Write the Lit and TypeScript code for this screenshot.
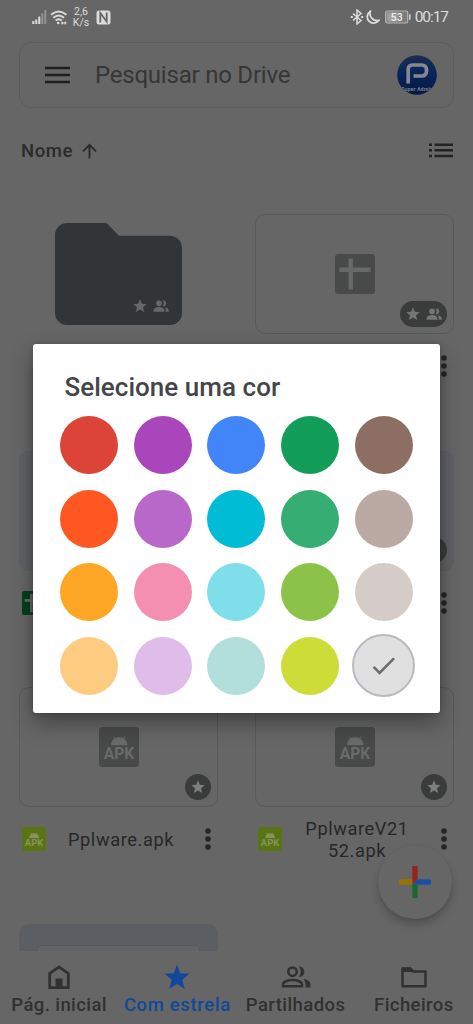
import { LitElement, html, css } from "lit";
import { customElement } from "lit/decorators.js";

const STAR = "M12 17.27 18.18 21l-1.64-7.03L22 9.24l-7.19-.61L12 2 9.19 8.63 2 9.24l5.46 4.73L5.82 21z";

const star = (size: number) => html`
  <svg width=${size} height=${size} viewBox="0 0 24 24"><path fill="currentColor" d=${STAR} /></svg>`;

const people = (size: number) => html`
  <svg width=${size} height=${size} viewBox="0 0 24 24">
    <circle cx="9" cy="8" r="4.300" fill="currentColor" />
    <path fill="currentColor" d="M9 13.500c-3 0-8 1.500-8 4.500v2.500h16V18c0-3-5-4.500-8-4.500zM14.300 3.900a6.300 6.300 0 0 1 0 8.200 4.300 4.300 0 1 0 0-8.200zM17.200 13.700c1.200 1.100 1.900 2.500 1.900 4.300v2.500H23.500V18c0-2.500-3.500-3.800-6.300-4.300z" />
  </svg>`;

const dots = html`
  <svg class="dots" width="8" height="24" viewBox="0 0 8 24">
    <circle cx="4" cy="4" r="2.800" /><circle cx="4" cy="12" r="2.800" /><circle cx="4" cy="20" r="2.800" />
  </svg>`;

const sheet = (size: number) => html`
  <svg width=${size} height=${size} viewBox="0 0 40 40">
    <rect width="40" height="40" rx="3.500" fill="currentColor" />
    <path class="glyph" d="M4.500 15.700h31M15.700 4.500v31" fill="none" stroke-width="4.400" />
  </svg>`;

const apk = (size: number) => html`
  <svg width=${size} height=${size} viewBox="0 0 40 40">
    <rect width="40" height="40" rx="3.500" fill="currentColor" />
    <path class="robot" d="M12 18.200a8.300 8.300 0 0 1 3.200-6.400l-1.100-1.700.8-.5 1.200 1.700a9.500 9.500 0 0 1 8.300 0l1.200-1.700.8.500-1.100 1.700a8.300 8.300 0 0 1 3.200 6.400z" />
    <text class="apk" x="20" y="31.600" text-anchor="middle" textLength="30.500" lengthAdjust="spacingAndGlyphs">APK</text>
  </svg>`;

const SWATCHES = [
  "#db4437", "#aa46bc", "#4285f8", "#129e59", "#8d6e63",
  "#ff5722", "#b868c8", "#00bcd5", "#36ad73", "#bbaaa4",
  "#fea726", "#f48fb1", "#80deea", "#8bc34a", "#d6ccc7",
  "#fecc80", "#e0bde8", "#b2dfdb", "#cddc37", "#e0e0e0",
];

@customElement("color-dialog")
export class ColorDialog extends LitElement {
  static styles = css`
    :host {
      display: block; box-sizing: border-box; width: 407px; height: 369px;
      background: #fff; border-radius: 3px; padding: 27.500px 27.300px 0;
      box-shadow: 0 10px 22px rgba(0, 0, 0, .34), 0 1px 6px rgba(0, 0, 0, .18);
    }
    .title { margin: 0 0 13.600px 4.200px; font: 500 26px/31px Roboto, sans-serif; color: #434549; letter-spacing: .03px; white-space: nowrap; }
    .grid { display: grid; grid-template-columns: repeat(5, 58px); gap: 15.500px 15.600px; }
    .swatch { width: 58px; height: 58px; border-radius: 50%; }
    .selected {
      box-sizing: border-box; width: 63px; height: 63px; margin: -2.500px;
      border: 2.500px solid #babac0; display: grid; place-items: center;
    }
  `;
  render() {
    return html`
      <h2 class="title">Selecione uma cor</h2>
      <div class="grid">
        ${SWATCHES.map((c, i) => i === 19
          ? html`<div class="swatch selected" style="background:${c}">
              <svg width="24" height="20" viewBox="0 0 24 20"><path d="M1.600 10.800l6 6L22 2.400" fill="none" stroke="#6b6b6b" stroke-width="2.600" /></svg>
            </div>`
          : html`<div class="swatch" style="background:${c}"></div>`)}
      </div>`;
  }
}

@customElement("app-root")
export class AppRoot extends LitElement {
  static styles = css`
    :host {
      display: flex; flex-direction: column; position: relative; overflow: hidden;
      width: 473px; height: 1024px; background: #666; color: #2a2b2b;
      font-family: Roboto, sans-serif;
    }
    svg { display: block; flex: none; }
    .status { height: 42px; flex: none; box-sizing: border-box; display: flex; justify-content: space-between; padding: 5px 25px 0 32px; color: #dcdcdc; }
    .side { display: flex; align-items: center; height: 24px; }
    .wifi { margin-left: 3px; }
    .moon { margin-left: 1px; }
    .power { margin-left: 5px; }
    .speed { font-size: 10.500px; line-height: 11.500px; text-align: center; width: 18px; margin: 0 6px 0 4px; }
    .clock { font-size: 15.500px; line-height: 24px; letter-spacing: -1.050px; margin: 0 0 0 4px; white-space: nowrap; }
    .battery { font: 500 10px Roboto, sans-serif; }

    .search {
      flex: none; box-sizing: border-box; height: 66px; margin: 0 19px; border: 1.500px solid #5c5c5c; border-radius: 12px;
      display: flex; align-items: center; padding: 0 16px 0 25px;
    }
    .hint { flex: 1; margin-left: 25px; font-size: 24px; line-height: 30px; color: #353636; letter-spacing: -.22px; white-space: nowrap; }
    .sort { flex: none; height: 106px; box-sizing: border-box; display: flex; padding: 30px 19px 0 21px; }
    .sort-name { font-weight: 500; font-size: 18.500px; line-height: 26px; letter-spacing: .55px; margin-right: 9px; }
    .sort-arrow { margin: 5px auto 0 0; }
    .list { margin-top: 5px; }

    .files { flex: 1; min-height: 0; overflow: hidden; display: grid; grid-template-columns: 199px 199px; column-gap: 37px; padding: 0 19px; grid-auto-rows: 236.500px; align-content: start; }
    .card { box-sizing: border-box; height: 120px; border: 1.500px solid #585959; border-radius: 10px; display: grid; place-items: center; position: relative; color: #484949; }
    .tinted { background: #5f6164; border-color: #5d5f62; }
    .cool { background: #5b5f63; border-color: #5b5f63; }
    .bare { border: none; }
    .glyph { stroke: #686868; }
    .robot { fill: #6a6a6a; }
    .apk { fill: #6a6a6a; font: 700 16px Roboto, sans-serif; }
    .badge { position: absolute; right: 6.500px; bottom: 6.500px; height: 26px; width: 26px; box-sizing: border-box; border-radius: 13px; background: #3a3c3c; color: #7e7e7e; display: flex; align-items: center; justify-content: center; gap: 5px; }
    .wide { width: 47px; right: 6px; bottom: 6px; color: #747575; }
    .on-folder { position: absolute; right: 49.500px; bottom: 20px; display: flex; gap: 5px; color: #676868; }
    .meta { height: 64px; display: grid; grid-template-columns: 24px 1fr 8px; align-items: center; padding: 0 6.500px 0 3px; }
    .label { font-size: 18.200px; line-height: 21.500px; letter-spacing: .6px; text-align: center; width: 108px; margin: 1px auto 0 21px; color: #262727; }
    .label span { display: block; white-space: nowrap; }
    .dots { fill: #242525; }
    .green { color: #05401f; }
    .lime { color: #597413; }
    .lime .robot, .lime .apk { fill: #86935e; }
    .page { align-self: end; width: 163px; height: 98px; box-sizing: border-box; border: 1.500px solid #565a5e; border-radius: 5px 5px 0 0; background: #626466; }

    .nav { flex: none; height: 73px; display: grid; grid-template-columns: repeat(4, 1fr); background: #666; }
    .tab { display: flex; flex-direction: column; align-items: center; padding-top: 12.500px; font-weight: 500; font-size: 18.500px; line-height: 24px; letter-spacing: .42px; white-space: nowrap; color: #303131; }
    .tab svg { margin-bottom: 3px; }
    .active { color: #12479a; letter-spacing: .65px; }

    .fab { position: absolute; right: 21px; bottom: 105px; width: 74px; height: 74px; border-radius: 50%; background: #666; display: grid; place-items: center; box-shadow: 0 6px 8px rgba(0, 0, 0, .2), 0 1px 3px rgba(0, 0, 0, .08); }
    .overlay { position: absolute; inset: 33px 0 0; display: grid; place-items: start center; padding-top: 311px; }
  `;

  card(body: unknown, badge: "none" | "star" | "both", kind = "") {
    return html`<div class="card ${kind}">${body}
      ${badge === "none" ? "" : html`<div class="badge ${badge === "both" ? "wide" : ""}">
        ${star(16)}${badge === "both" ? people(16) : ""}</div>`}
    </div>`;
  }

  meta(icon: unknown, lines: string[]) {
    return html`<div class="meta">${icon}<div class="label">${lines.map((l) => html`<span>${l}</span>`)}</div>${dots}</div>`;
  }

  render() {
    const folder = html`
      <svg width="127" height="102" viewBox="0 0 127 102">
        <path fill="#323538" d="M12 0H51.500L64 12.700H115a12 12 0 0 1 12 12V90a12 12 0 0 1-12 12H12A12 12 0 0 1 0 90V12A12 12 0 0 1 12 0z" />
      </svg>
      <div class="on-folder">${star(16)}${people(16)}</div>`;
    const greenSheet = html`<span class="green">${sheet(24)}</span>`;
    const limeApk = html`<span class="lime">${apk(24)}</span>`;
    return html`
      <header class="status">
        <div class="side">
          <svg width="15" height="14" viewBox="0 0 15 14">
            <path d="M1.300 11v3M4.300 9.500V14M7.300 6.500V14" stroke="currentColor" stroke-width="2" />
            <path d="M10.300 3.500V14M13.300 0V14" stroke="#929292" stroke-width="2" />
          </svg>
          <svg class="wifi" width="18" height="16" viewBox="0 0 18 16" fill="none" stroke="currentColor" stroke-width="1.900">
            <path d="M1 5.800q7.700-6.500 15.400 0M3.300 8.800q5.400-4.600 10.800 0M5.600 11.600q3.100-2.600 6.200 0" />
            <circle cx="8.200" cy="14" r="1.300" fill="currentColor" stroke="none" />
            <path d="M11 14h5.500M12.200 12.600v2.800M15.200 12.600v2.800" stroke-width="1.200" />
          </svg>
          <div class="speed">2,6<br />K/s</div>
          <svg width="15" height="15" viewBox="0 0 15 15">
            <rect x=".5" y=".5" width="14" height="14" rx="2.500" fill="currentColor" />
            <path d="M4.300 12.500V3l6.400 8.500V2.500" fill="none" stroke="#666" stroke-width="1.800" />
          </svg>
        </div>
        <div class="side">
          <svg width="14" height="16" viewBox="0 0 14 16" fill="none" stroke="currentColor" stroke-width="1.500">
            <path d="M3 4.500l8 7L7 15V1l4 3.500-8 7" /><path d="M.8 8h2M11.200 8h2" stroke-width="1.800" />
          </svg>
          <svg class="moon" width="15" height="15" viewBox="0 0 15 15">
            <path d="M5.200 1.500a6.300 6.300 0 1 0 8.500 9A7.300 7.300 0 0 1 5.200 1.500z" fill="none" stroke="currentColor" stroke-width="1.800" />
          </svg>
          <svg class="power" width="26" height="14" viewBox="0 0 26 14">
            <rect x=".7" y="1" width="22" height="12" rx="1.500" fill="#7c7c7c" stroke="#b4b4b4" stroke-width="1.200" />
            <rect x="2.200" y="2.500" width="10.500" height="9" fill="#a0a0a0" />
            <path d="M24.800 4.300v5.400" stroke="#d0d0d0" stroke-width="1.600" />
            <text class="battery" x="11.700" y="10.600" text-anchor="middle" textLength="12" fill="#f0f0f0">53</text>
          </svg>
          <div class="clock">00:17</div>
        </div>
      </header>

      <div class="search">
        <svg width="25" height="18" viewBox="0 0 25 18"><path d="M0 2h25M0 9h25M0 16h25" stroke="#1e1f1f" stroke-width="2.500" /></svg>
        <div class="hint">Pesquisar no Drive</div>
        <svg width="40" height="40" viewBox="0 0 40 40">
          <defs>
            <linearGradient id="disc" x1="0" y1="0" x2="0" y2="1"><stop offset="0" stop-color="#1b2d51" /><stop offset=".5" stop-color="#08235a" /><stop offset="1" stop-color="#061a42" /></linearGradient>
            <clipPath id="round"><circle cx="20" cy="20" r="19.800" /></clipPath>
          </defs>
          <circle cx="20" cy="20" r="19.800" fill="url(#disc)" />
          <path d="M11.200 28.500V14a4 4 0 0 1 4-4H25a4.500 4.500 0 0 1 4.500 4.500v2A4.500 4.500 0 0 1 25 21H16.500" fill="none" stroke="#858890" stroke-width="3.700" />
          <text x="20" y="36.200" text-anchor="middle" font-size="5.500" font-weight="700" fill="#777d88" clip-path="url(#round)">Super Admin</text>
        </svg>
      </div>

      <div class="sort">
        <div class="sort-name">Nome</div>
        <svg class="sort-arrow" width="15" height="16" viewBox="0 0 15 16"><path d="M7.500 15.500V2M1 8.300L7.500 1.800 14 8.300" fill="none" stroke="currentColor" stroke-width="1.900" /></svg>
        <svg class="list" width="25" height="15" viewBox="0 0 25 15"><path d="M0 1.700h3M5.500 1.700H24M0 7.300h3M5.500 7.300H24M0 12.900h3M5.500 12.900H24" stroke="#222323" stroke-width="2.500" /></svg>
      </div>

      <main class="files">
        <div>${this.card(folder, "none", "bare")}</div>
        <div>${this.card(sheet(40), "both")}${this.meta(greenSheet, [])}</div>
        <div>${this.card("", "none", "tinted")}${this.meta(greenSheet, [])}</div>
        <div>${this.card("", "star", "tinted")}${this.meta(greenSheet, [])}</div>
        <div>${this.card(apk(40), "star")}${this.meta(limeApk, ["Pplware.apk"])}</div>
        <div>${this.card(apk(40), "star")}${this.meta(limeApk, ["PplwareV21", "52.apk"])}</div>
        <div>${this.card(html`<div class="page"></div>`, "none", "cool")}</div>
      </main>

      <nav class="nav">
        <div class="tab">
          <svg width="24" height="26" viewBox="0 0 24 26"><path d="M2.700 23.700V9.500L12 2.800l9.300 6.700v14.200z" fill="none" stroke="currentColor" stroke-width="2.700" /><path d="M8.500 14.500h7v9h-7z" fill="currentColor" /></svg>
          Pág. inicial
        </div>
        <div class="tab active">
          <svg width="30" height="26" viewBox="0 0 30 26"><path fill="currentColor" d="M15 .5l3.200 8.700 9.300.6-7.200 6 2.400 9.200L15 19.900 7.300 25l2.400-9.200-7.200-6 9.300-.6z" /></svg>
          Com estrela
        </div>
        <div class="tab">
          <svg width="30" height="26" viewBox="0 0 30 26">
            <circle cx="11.500" cy="7.700" r="4.200" fill="none" stroke="currentColor" stroke-width="2.500" />
            <path d="M2 22.300v-2.100c0-2.300 5-4.200 9.500-4.200s9.500 1.900 9.500 4.200v2.100z" fill="none" stroke="currentColor" stroke-width="2.500" />
            <path fill="currentColor" d="M18 2.300a5.400 5.400 0 1 1 0 10.800q3.400-5.400 0-10.800zM22 14.700c4.500.8 7.500 2.900 7.500 5.500v3.300h-5v-3.300c0-2.300-.8-4-2.500-5.500z" />
          </svg>
          Partilhados
        </div>
        <div class="tab">
          <svg width="28" height="26" viewBox="0 0 28 26"><path d="M2.500 4.500h8l2.500 3h12.500v14.800h-23z" fill="none" stroke="currentColor" stroke-width="2.500" stroke-linejoin="round" /><path d="M2.500 3.500h8.500l3 4.500H2.500z" fill="currentColor" /></svg>
          Ficheiros
        </div>
      </nav>

      <div class="fab">
        <svg width="32" height="32" viewBox="0 0 32 32">
          <path fill="#94251e" d="M13.300 0h5.400v13.300l-5.400 5.400z" />
          <path fill="#9a7200" d="M0 13.300h13.300v5.400H0z" />
          <path fill="#1b4fa5" d="M18.700 13.300H32v5.400H13.300z" />
          <path fill="#19692e" d="M13.300 18.700h5.400V32h-5.400z" />
        </svg>
      </div>

      <div class="overlay"><color-dialog></color-dialog></div>`;
  }
}
